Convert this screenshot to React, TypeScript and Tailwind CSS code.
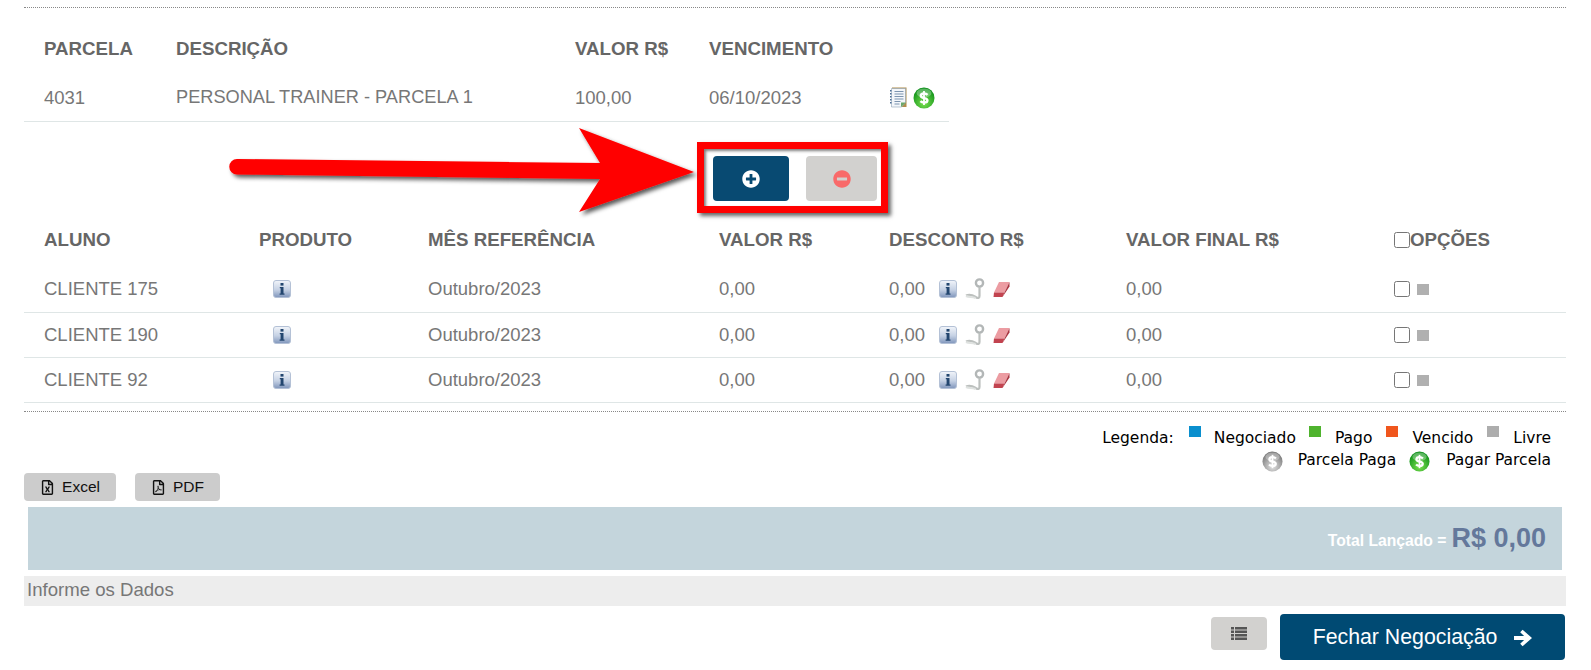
import React from "react";
import { FaMinusCircle, FaPlusCircle, FaRegFileExcel, FaRegFilePdf } from "react-icons/fa";

const alunos = [
  { nome: "CLIENTE 175", h: "h-[51px] pt-[4px]" },
  { nome: "CLIENTE 190", h: "h-[45px]" },
  { nome: "CLIENTE 92", h: "h-[45px]" },
];

const Coin = ({ id, from, to, size }: { id: string; from: string; to: string; size: number }) => (
  <svg width={size} height={size} viewBox="0 0 22 22" className="shrink-0">
    <defs>
      <radialGradient id={id} cx="50%" cy="75%" r="70%">
        <stop offset="0%" stopColor={from} />
        <stop offset="100%" stopColor={to} />
      </radialGradient>
    </defs>
    <circle cx="11" cy="11" r="10.5" fill={`url(#${id})`} />
    <ellipse cx="11" cy="6" rx="7.5" ry="4.5" fill="#fff" opacity="0.3" />
    <path d="M14.6 7.8C13.7 6.9 12.5 6.5 11 6.5c-1.9 0-3.2 1-3.2 2.3 0 3.1 6.6 1.5 6.6 4.5 0 1.4-1.4 2.3-3.3 2.3-1.5 0-2.8-.5-3.7-1.4" fill="none" stroke="#fff" strokeWidth="2.4" />
    <path d="M11 4v14" stroke="#fff" strokeWidth="1.8" />
  </svg>
);

const NoteIcon = () => (
  <svg width="17" height="21" viewBox="0 0 17 21" className="shrink-0">
    <rect x="2" y="0.5" width="14.5" height="19.5" fill="#b08d4c" />
    <path d="M1.5 1.5h14v14l-4 4.5h-10z" fill="#f3f6fa" stroke="#8fa3b5" strokeWidth="0.6" />
    <path d="M4.5 4.5h9M4.5 7h9M4.5 9.5h9M4.5 12h9M4.5 14.5h6M4.5 17h5" stroke="#7d95b0" strokeWidth="1" />
    <path d="M0.5 3v1.5M0.5 6v1.5M0.5 9v1.5M0.5 12v1.5M0.5 15v1.5" stroke="#4d6f96" strokeWidth="2" />
    <path d="M11 20v-4.5h5z" fill="#6aa76a" />
  </svg>
);

const InfoIcon = () => (
  <svg width="18" height="18" viewBox="0 0 18 18" className="shrink-0">
    <defs>
      <linearGradient id="infoBg" x1="0" y1="0" x2="0" y2="1">
        <stop offset="0%" stopColor="#f2f5fa" />
        <stop offset="55%" stopColor="#c5d1e4" />
        <stop offset="100%" stopColor="#7f95bb" />
      </linearGradient>
    </defs>
    <rect x="0.5" y="0.5" width="17" height="17" rx="2.5" fill="url(#infoBg)" stroke="#b4c1d6" />
    <rect x="7.5" y="3" width="3" height="2.6" fill="#23466f" />
    <path d="M6.8 7h3.7v6.5h1v1.3H6.6v-1.3h1V8.2h-.8z" fill="#23466f" />
  </svg>
);

const PinIcon = () => (
  <svg width="20" height="22" viewBox="0 0 20 22" className="shrink-0">
    <circle cx="14.5" cy="5" r="3.6" fill="none" stroke="#b3b7b7" strokeWidth="2.4" />
    <path d="M14.5 9v9c0 2.2-1.5 2.4-3.5 1.2S6 15.5 1 17.5" fill="none" stroke="#bcc0be" strokeWidth="2.2" />
    <path d="M1 18c3 1.5 6 .5 9.5 2" fill="none" stroke="#dfe2e0" strokeWidth="2" />
  </svg>
);

const EraserIcon = () => (
  <svg width="17" height="17" viewBox="0 0 17 17" className="shrink-0">
    <path d="M6 1H16.5L11.5 11.5H1z" fill="#ec9ca2" />
    <path d="M1 11.5H11.5L9.5 16H0.5z" fill="#c2434f" />
    <path d="M11.5 11.5L16.5 1V5.5L9.5 16z" fill="#a93541" />
  </svg>
);

const ListIcon = () => (
  <svg width="16" height="13" viewBox="0 0 16 13" fill="#555">
    <path d="M0 0h3v2.5H0zM4 0h12v2.5H4zM0 3.5h3V6H0zM4 3.5h12V6H4zM0 7h3v2.5H0zM4 7h12v2.5H4zM0 10.5h3V13H0zM4 10.5h12V13H4z" />
  </svg>
);

const BoldArrow = () => (
  <svg width="18" height="18" viewBox="0 0 18 18" fill="#fff">
    <path d="M8.6 0.8L18 9l-9.4 8.2-2.4-2.5 3.9-3.6H0V6.9h10.1L6.2 3.3z" />
  </svg>
);

const Swatch = ({ color }: { color: string }) => <span className={`block w-3 h-[11px] shrink-0 ${color}`} />;

export default function App() {
  return (
    <div className="relative w-[1591px] h-[670px] overflow-hidden bg-white font-['Liberation_Sans',Arial,sans-serif] text-[18.5px] text-[#777]">
      <div className="pt-[7px] pl-6 pr-[25px]">
        <div className="border-t border-dotted border-[#888]" />

        {/* Parcelas */}
        <div className="w-[925px] mt-[18px]">
          <div className="grid grid-cols-[132px_399px_134px_180px_1fr] items-center h-[48px] pb-[2px] px-5 font-bold text-[18.7px] text-[#666]">
            <span>PARCELA</span>
            <span>DESCRIÇÃO</span>
            <span>VALOR R$</span>
            <span>VENCIMENTO</span>
            <span />
          </div>
          <div className="grid grid-cols-[132px_399px_134px_180px_1fr] items-center h-[48px] px-5 border-b border-[#dfe6e6]">
            <span>4031</span>
            <span className="text-[18.2px]">PERSONAL TRAINER - PARCELA 1</span>
            <span>100,00</span>
            <span>06/10/2023</span>
            <span className="flex items-center gap-[6px] pl-[1px]">
              <NoteIcon />
              <Coin id="coinTop" from="#7be04f" to="#0b8f17" size={22} />
            </span>
          </div>
        </div>

        {/* Botoes */}
        <div className="flex mt-[34px] ml-[689px] gap-[17px]">
          <button className="flex items-center justify-center w-[76px] h-[45px] rounded bg-[#084a72] text-white">
            <FaPlusCircle size={18} />
          </button>
          <button className="flex items-center justify-center w-[71px] h-[45px] rounded bg-[#d2d1cf] text-[#f96a6a]">
            <FaMinusCircle size={18} />
          </button>
        </div>

        {/* Alunos */}
        <div className="mt-[17px]">
          <div className="grid grid-cols-[215px_169px_291px_170px_237px_268px_1fr] items-center h-[44px] px-5 font-bold text-[18.7px] text-[#666]">
            <span>ALUNO</span>
            <span>PRODUTO</span>
            <span>MÊS REFERÊNCIA</span>
            <span>VALOR R$</span>
            <span>DESCONTO R$</span>
            <span>VALOR FINAL R$</span>
            <span className="flex items-center">
              <input type="checkbox" className="w-4 h-4 m-0" />
              <span>OPÇÕES</span>
            </span>
          </div>
          {alunos.map((a) => (
            <div
              key={a.nome}
              className={`grid grid-cols-[215px_169px_291px_170px_237px_268px_1fr] items-center px-5 border-b border-[#dfe6e6] ${a.h}`}
            >
              <span>{a.nome}</span>
              <span className="pl-[14px]">
                <InfoIcon />
              </span>
              <span>Outubro/2023</span>
              <span>0,00</span>
              <span className="flex items-center">
                <span className="w-[50px]">0,00</span>
                <span className="flex items-center gap-[8px]">
                  <InfoIcon />
                  <PinIcon />
                  <EraserIcon />
                </span>
              </span>
              <span>0,00</span>
              <span className="flex items-center gap-[7px]">
                <input type="checkbox" className="w-4 h-4 m-0" />
                <span className="w-3 h-[11px] bg-[#b0b0b0]" />
              </span>
            </div>
          ))}
        </div>

        <div className="mt-2 border-t border-dotted border-[#888]" />

        {/* Legenda */}
        <div className="flex flex-col items-end pr-[15px] mt-[14px] font-['DejaVu_Sans',sans-serif] text-[15.5px] text-black">
          <div className="flex items-start h-[24px]">
            <span className="mt-[1px]">Legenda:</span>
            <span className="ml-[15px]"><Swatch color="bg-[#0a8fce]" /></span>
            <span className="ml-[13px] mt-[1px]">Negociado</span>
            <span className="ml-[13px]"><Swatch color="bg-[#4fb32e]" /></span>
            <span className="ml-[14px] mt-[1px]">Pago</span>
            <span className="ml-[14px]"><Swatch color="bg-[#f0561d]" /></span>
            <span className="ml-[14px] mt-[1px]">Vencido</span>
            <span className="ml-[14px]"><Swatch color="bg-[#adadad]" /></span>
            <span className="ml-[14px] mt-[1px]">Livre</span>
          </div>
          <div className="flex items-center h-[22px]">
            <Coin id="coinSilver" from="#e2e2e2" to="#777" size={21} />
            <span className="ml-[15px]">Parcela Paga</span>
            <span className="ml-[13px]">
              <Coin id="coinLegend" from="#7be04f" to="#0b8f17" size={21} />
            </span>
            <span className="ml-[16px]">Pagar Parcela</span>
          </div>
        </div>

        {/* Exportar */}
        <div className="flex gap-[19px] mt-[1px] text-[15.5px] text-[#111]">
          <button className="flex items-center justify-center gap-[7px] w-[92px] h-[28px] rounded-sm bg-[#cccccc]">
            <FaRegFileExcel size={15} />
            <span>Excel</span>
          </button>
          <button className="flex items-center justify-center gap-[7px] w-[85px] h-[28px] rounded-sm bg-[#cccccc]">
            <FaRegFilePdf size={15} />
            <span>PDF</span>
          </button>
        </div>

        {/* Total */}
        <div className="flex items-center justify-end ml-1 mr-1 mt-[6px] h-[63px] pr-[16px] bg-[#c4d5dc]">
          <span className="text-[15.7px] font-bold text-white mt-1">Total Lançado =</span>
          <span className="ml-[5px] text-[27px] font-bold text-[#64789b]">R$ 0,00</span>
        </div>

        <div className="flex items-center mt-[6px] h-[30px] pb-[2px] pl-[3px] bg-[#ededed] text-[18.6px]">Informe os Dados</div>

        <div className="flex justify-end items-start gap-[13px] mt-2 pr-[1px]">
          <button className="flex items-center justify-center w-[56px] h-[33px] mt-[3px] rounded bg-[#d2d1cf]">
            <ListIcon />
          </button>
          <button className="flex items-center justify-center gap-[17px] w-[285px] h-[46px] pt-[1px] rounded bg-[#004a73] text-[21.3px] text-white">
            <span>Fechar Negociação</span>
            <BoldArrow />
          </button>
        </div>
      </div>

      {/* Seta e moldura de destaque */}
      <div className="absolute left-[697px] top-[142px] w-[191px] h-[71px] border-[7px] border-[#ff0000] shadow-[3px_3px_4px_rgba(0,0,0,0.6),inset_2px_2px_3px_rgba(0,0,0,0.5)]" />
      <svg className="absolute left-[225px] top-[122px]" width="480" height="100" viewBox="0 0 480 100">
        <defs>
          <filter id="arrowShadow" x="-5%" y="-10%" width="110%" height="125%">
            <feDropShadow dx="3" dy="3" stdDeviation="2" floodColor="#000" floodOpacity="0.65" />
          </filter>
        </defs>
        <path
          d="M12 37L375 41L354 6L469 50L354 90L375 57L12 52.5A7.7 7.7 0 0 1 12 37z"
          fill="#ff0000"
          filter="url(#arrowShadow)"
        />
      </svg>
    </div>
  );
}
